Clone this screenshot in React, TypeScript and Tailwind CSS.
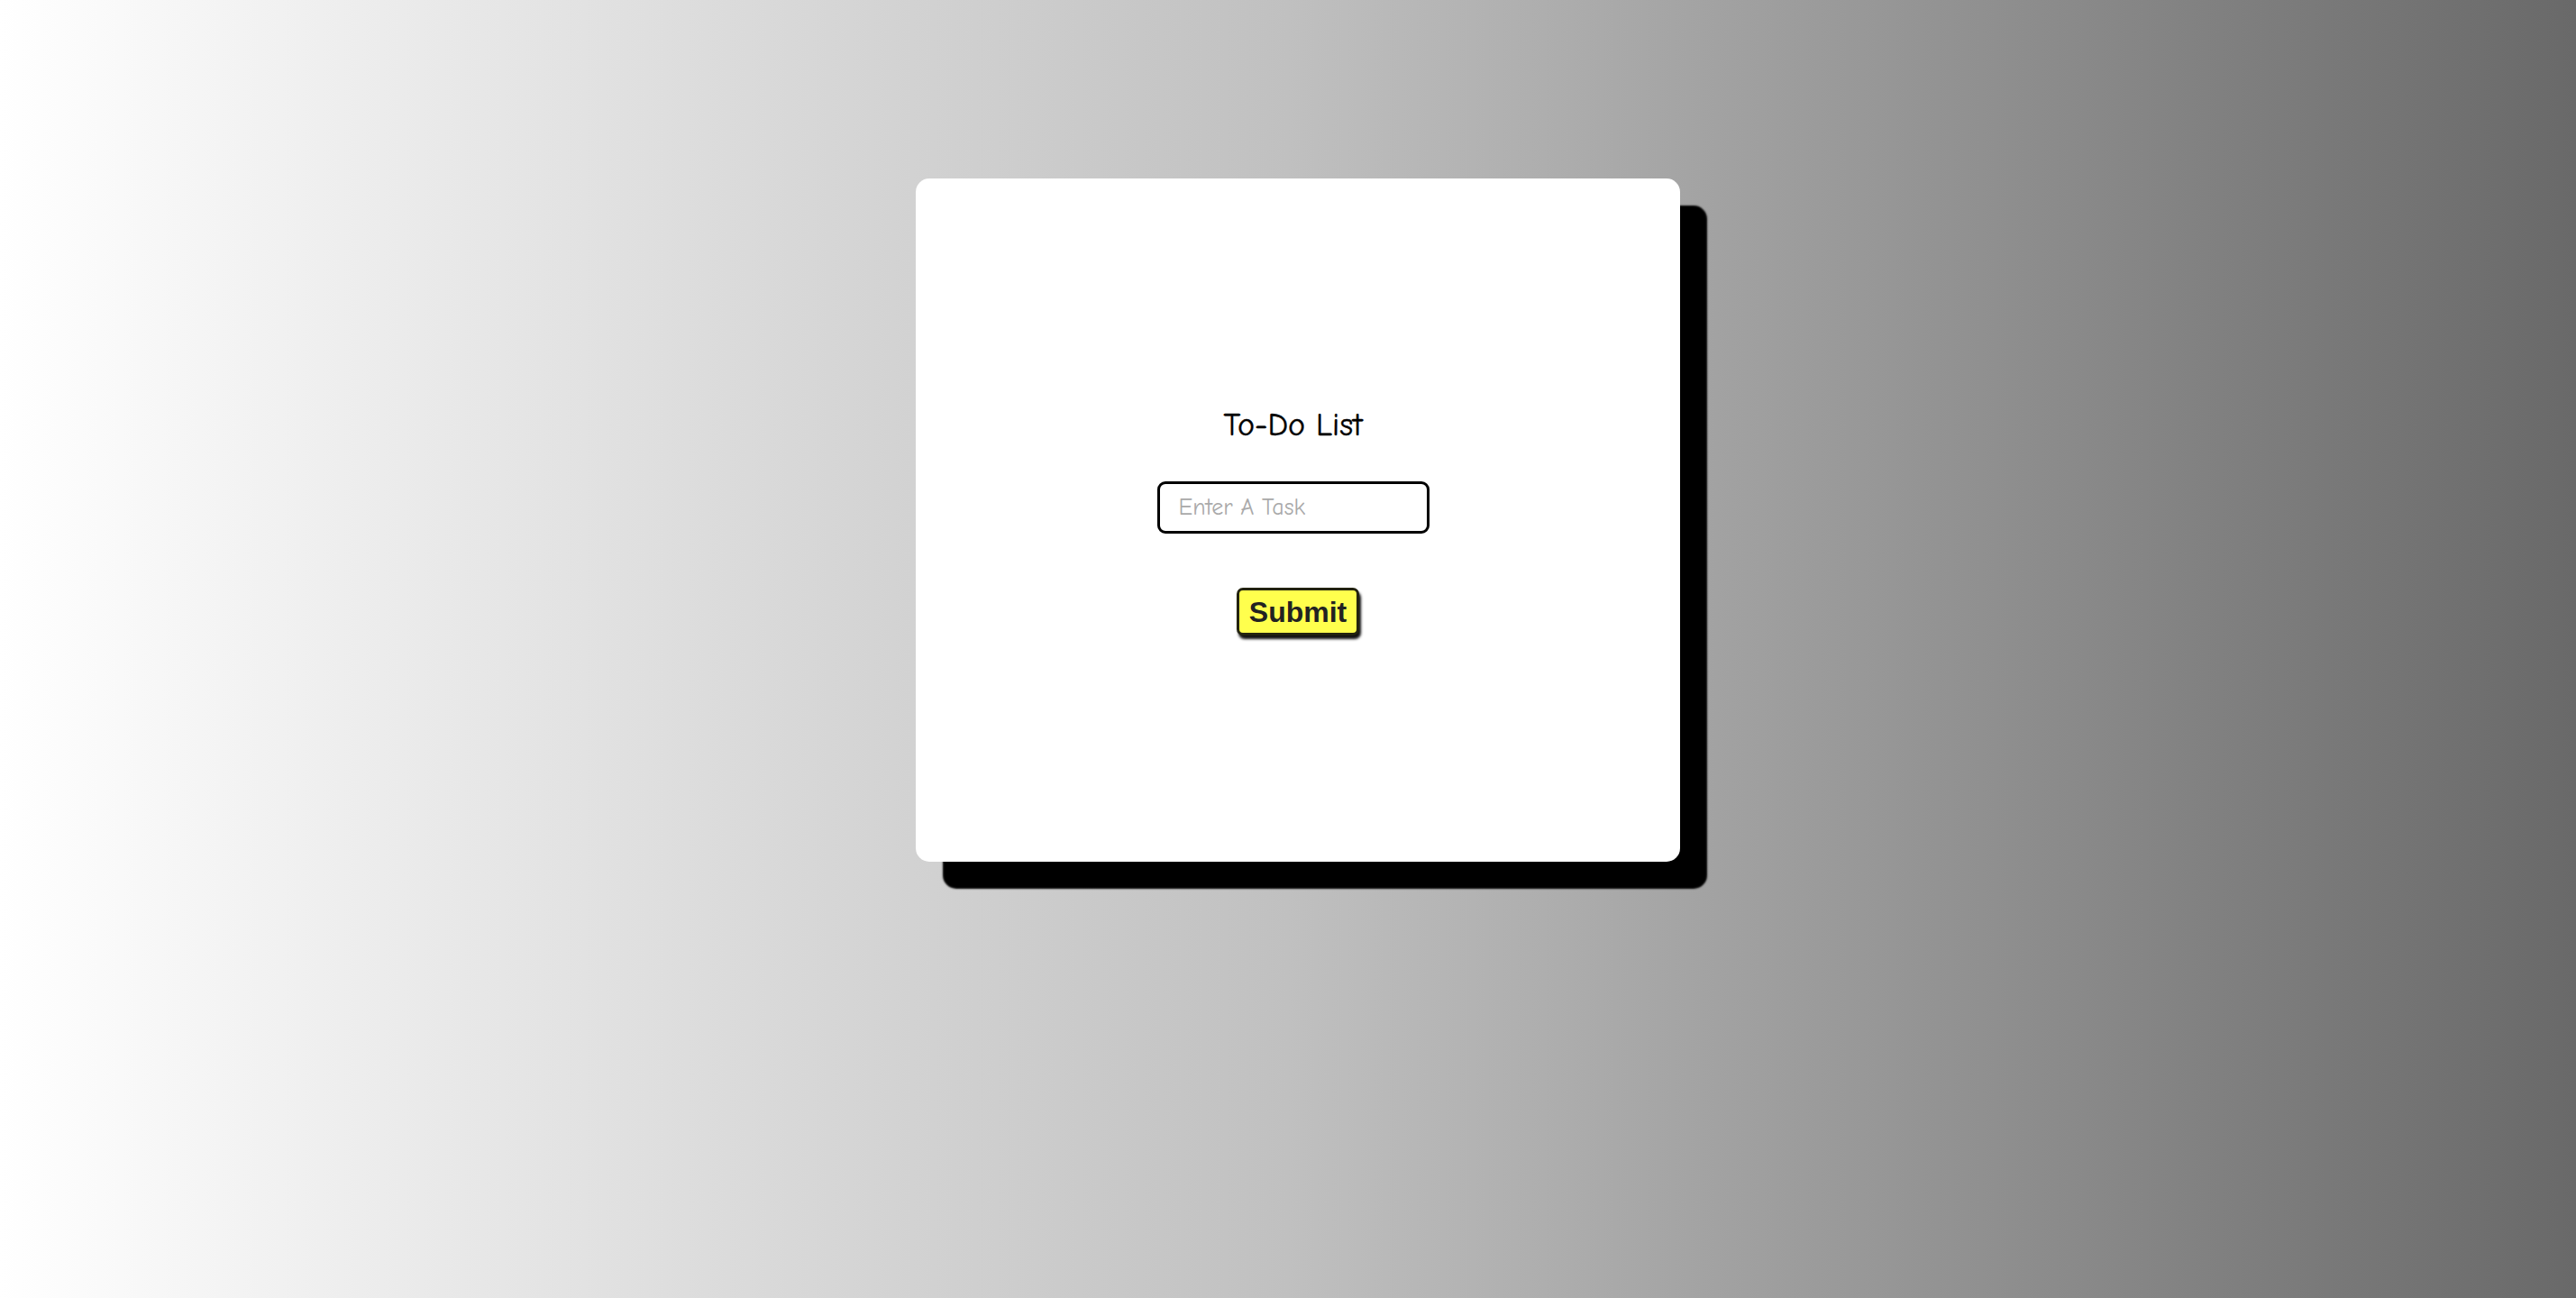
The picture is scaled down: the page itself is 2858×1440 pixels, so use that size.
export default function App() {
  return (
    <div className="min-h-screen w-full bg-gradient-to-r from-white via-[silver] to-[dimgray] flex justify-center items-start pt-[198px] pl-[22px]">
      <div className="w-[848px] h-[758px] bg-white rounded-[15px] shadow-[30px_30px_2px_#000] flex flex-col items-center pt-[252px]">
        <h1 className="font-['Comic_Sans_MS','Comic_Neue','DejaVu_Sans',sans-serif] text-[36px] leading-[44px] text-black mr-[11px] [-webkit-text-stroke:0.4px_black]">
          To-Do List
        </h1>
        <input
          type="text"
          placeholder="Enter A Task"
          className="font-['Comic_Sans_MS','Comic_Neue','DejaVu_Sans',sans-serif] mt-[40px] mr-[11px] w-[302px] h-[58px] border-[3px] border-black rounded-[9px] px-[21px] text-[26px] placeholder:text-[#a9a9a9] outline-none"
        />
        <button className="font-['Liberation_Sans',Arial,sans-serif] mt-[60px] w-[136px] h-[53px] bg-[#ffff4d] border-[3px] border-[#23230f] rounded-[7px] text-[32px] font-bold text-[#222] shadow-[2px_4px_3px_#111] leading-none">
          Submit
        </button>
      </div>
    </div>
  );
}
